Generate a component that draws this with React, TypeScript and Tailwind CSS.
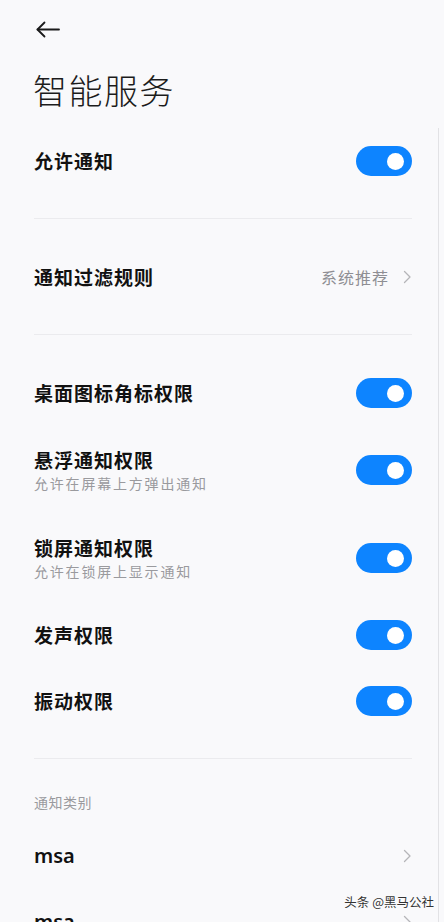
import React from "react";

const font = { fontFamily: '"Noto Sans CJK SC", "Noto Sans", sans-serif' };

function Toggle() {
  return (
    <div className="w-[56px] h-[30px] rounded-full bg-[#0d84ff] flex items-center justify-end pr-[8px]">
      <div className="size-[17px] rounded-full bg-white" />
    </div>
  );
}

function Chevron() {
  return (
    <svg width="9" height="14" viewBox="0 0 9 14" fill="none">
      <path d="M1.5 1.5 L7 7 L1.5 12.5" stroke="#b5b5b8" strokeWidth="1.3" strokeLinecap="round" strokeLinejoin="round" />
    </svg>
  );
}

function Divider() {
  return <div className="mx-[34px] mr-[32px] h-px bg-[#ebebee]" />;
}

interface RowProps {
  title: string;
  sub?: string;
}

function ToggleRow({ title, sub }: RowProps) {
  return (
    <div className={`flex items-center justify-between pl-[34px] pr-[32px] ${sub ? "h-[88px]" : "h-[66px]"}`}>
      <div className="flex flex-col">
        <span className="text-[19px] leading-[24px] font-semibold tracking-[1px] text-[#111]">{title}</span>
        {sub && <span className="text-[14px] leading-[20px] tracking-[1.8px] text-[#9a9a9e] mt-[1px]">{sub}</span>}
      </div>
      <Toggle />
    </div>
  );
}

export default function App() {
  return (
    <div className="relative w-[444px] h-[922px] overflow-hidden bg-[#f9f9fb]" style={font}>
      <div className="pt-[21px] pl-[36px]">
        <svg width="24" height="17" viewBox="0 0 24 17" fill="none">
          <path d="M1.5 8.5 H23" stroke="#1a1a1a" strokeWidth="1.8" strokeLinecap="round" />
          <path d="M8.5 1.5 L1.5 8.5 L8.5 15.5" stroke="#1a1a1a" strokeWidth="1.8" strokeLinecap="round" strokeLinejoin="round" />
        </svg>
      </div>
      <h1 className="pl-[33px] mt-[32px] text-[34px] leading-[40px] font-light text-[#1c1c1c] tracking-[1.5px]">智能服务</h1>

      <div className="mt-[18px]">
        <ToggleRow title="允许通知" />
        <div className="h-[24px]" />
        <Divider />
        <div className="h-[25px]" />
        <div className="flex items-center justify-between h-[66px] pl-[34px] pr-[32px]">
          <span className="text-[19px] leading-[24px] font-semibold tracking-[1px] text-[#111]">通知过滤规则</span>
          <div className="flex items-center gap-[14px]">
            <span className="text-[16px] tracking-[1px] text-[#8e8e93]">系统推荐</span>
            <Chevron />
          </div>
        </div>
        <div className="h-[24px]" />
        <Divider />
        <div className="h-[25px]" />
        <ToggleRow title="桌面图标角标权限" />
        <ToggleRow title="悬浮通知权限" sub="允许在屏幕上方弹出通知" />
        <ToggleRow title="锁屏通知权限" sub="允许在锁屏上显示通知" />
        <ToggleRow title="发声权限" />
        <ToggleRow title="振动权限" />
        <div className="h-[24px]" />
        <Divider />
        <div className="pl-[34px] pt-[33px] pb-[11px] text-[14px] leading-[20px] tracking-[0.5px] text-[#9a9a9e]">通知类别</div>
        {["msa", "msa"].map((name, i) => (
          <div key={i} className="flex items-center justify-between h-[66px] pl-[34px] pr-[32px]">
            <span className="text-[20px] leading-[24px] font-semibold text-[#111]" style={{ fontFamily: '"Noto Sans", sans-serif' }}>{name}</span>
            <Chevron />
          </div>
        ))}
      </div>

      <div className="absolute right-[5px] top-[128px] bottom-0 w-[1.5px] bg-[#e2e2e5]" />
      <div className="absolute right-[10px] bottom-[10px] text-[12.5px] text-[#333] [text-shadow:0_0_3px_#fff]">头条 @黑马公社</div>
    </div>
  );
}
